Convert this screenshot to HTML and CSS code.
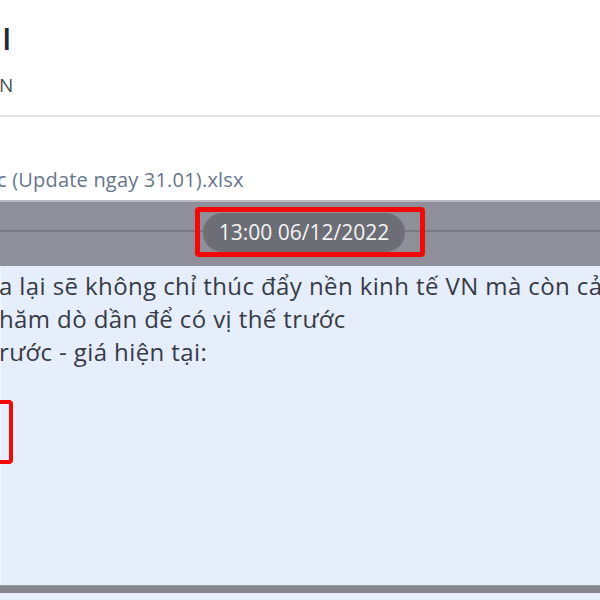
FILE: index.html
```html
<!DOCTYPE html>
<html lang="vi">
<head>
    <meta charset="UTF-8">
    <meta name="viewport" content="width=device-width, initial-scale=1.0">
    <title>Tin nhắn</title>
    <link rel="stylesheet" href="styles.css">
</head>
<body>

    <div class="header">
        <div class="title">I</div>
        <div class="subtitle">N</div>
    </div>

    <div class="file-row">
        <span class="file-name">c (Update ngay 31.01).xlsx</span>
    </div>

    <div class="time-band">
        <div class="time-mark">
            <span class="time-pill">13:00 06/12/2022</span>
        </div>
    </div>

    <div class="message">
        <p class="msg-line">a lại sẽ không chỉ thúc đẩy nền kinh tế VN mà còn cả</p>
        <p class="msg-line">hăm dò dần để có vị thế trước</p>
        <p class="msg-line">rước - giá hiện tại:</p>
        <div class="mark-left"></div>
    </div>

    <div class="bottom-bar"></div>
    <div class="bottom-rest"></div>

</body>
</html>
```

FILE: styles.css
```css
body { margin: 0; width: 600px; height: 600px; overflow: hidden; font-family: "Open Sans", "Noto Sans", sans-serif; background: #fff; }

.header { height: 117px; padding-left: 2px; box-sizing: border-box; border-bottom: 2px solid #e4e4e6; }
.title { padding-top: 20px; font-size: 31px; font-weight: 600; line-height: 36px; color: #1d2736; }
.subtitle { margin-top: 17px; margin-left: -3px; font-size: 19px; font-weight: 500; line-height: 24px; color: #4a4f57; }

.file-row { height: 83px; display: flex; align-items: flex-end; padding-bottom: 7px; box-sizing: border-box; }
.file-name { font-size: 20px; letter-spacing: 0.2px; color: #66758d; margin-left: -3px; white-space: nowrap; }

.time-band {
    height: 66px; background: #8e8f99; border-top: 2px solid #b9bac2; box-sizing: border-box;
    display: flex; align-items: center; justify-content: center; position: relative;
}
.time-band::before { content: ""; position: absolute; left: 0; right: 0; top: 28px; height: 2px; background: #777882; }
.time-mark {
    position: relative; margin-left: 20px; margin-top: -4px;
    border: 5px solid #f20a0a; border-radius: 4px; padding: 1px 15px 0 3px;
}
.time-pill {
    display: block; background: #6c6d75; color: #f4f4f6; font-size: 21px; line-height: 39px;
    padding: 0 16px; border-radius: 20px; white-space: nowrap;
}

.message { height: 319px; background: #e6edfb; padding-top: 3px; box-sizing: border-box; position: relative; border-left: 1px solid #f3f6fd; }
.msg-line { margin: 0 0 0 -2px; font-size: 24px; letter-spacing: 0.4px; line-height: 33px; color: #363b45; white-space: nowrap; }
.mark-left { position: absolute; left: -6px; top: 134px; width: 10px; height: 56px; border: 4px solid #f20a0a; border-radius: 4px; }

.bottom-bar { height: 8px; background: #85868e; border-top: 1px solid #9a9ba3; box-sizing: border-box; }
.bottom-rest { height: 20px; background: #e8eefb; }
```
